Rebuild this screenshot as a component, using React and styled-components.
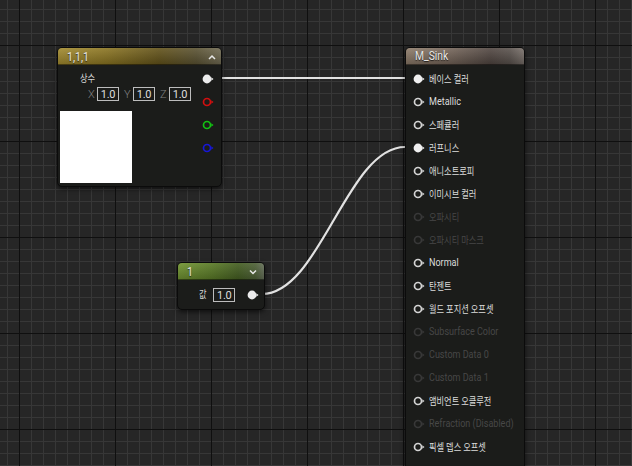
import styled, { createGlobalStyle } from "styled-components";

const GlobalStyle = createGlobalStyle`
  html, body {
    margin: 0;
    padding: 0;
    background: #262626;
  }
  body {
    width: 632px;
    height: 466px;
    overflow: hidden;
    font-family: Roboto, "Noto Sans CJK KR", sans-serif;
  }
`;

const headerTones = {
  gold: `linear-gradient(180deg, rgba(255,255,255,0.10), rgba(0,0,0,0.22)),
    linear-gradient(90deg, #a38b2e 0%, #8a7421 30%, #625219 62%, #5a5232 85%, #706a52 100%)`,
  green: `linear-gradient(180deg, rgba(255,255,255,0.08), rgba(0,0,0,0.22)),
    linear-gradient(90deg, #729532 0%, #5a7a27 40%, #455f22 70%, #4f6238 90%, #66705a 100%)`,
  clay: `linear-gradient(180deg, rgba(255,255,255,0.10), rgba(0,0,0,0.25)),
    linear-gradient(90deg, #8e7c6a 0%, #77675b 35%, #514641 72%, #5a524d 88%, #7a716b 100%)`,
};

const materialInputs = [
  ["베이스 컬러", "on"],
  ["Metallic", "en"],
  ["스페큘러", "en"],
  ["러프니스", "on"],
  ["애니소트로피", "en"],
  ["이미시브 컬러", "en"],
  ["오파시티", "dis"],
  ["오파시티 마스크", "dis"],
  ["Normal", "en"],
  ["탄젠트", "en"],
  ["월드 포지션 오프셋", "en"],
  ["Subsurface Color", "dis"],
  ["Custom Data 0", "dis"],
  ["Custom Data 1", "dis"],
  ["앰비언트 오클루전", "en"],
  ["Refraction (Disabled)", "dis"],
  ["픽셀 뎁스 오프셋", "en"],
];

const isKorean = (text) => /[가-힣]/.test(text);

const Pin = ({ color = "#d8d8d8", filled }) => (
  <PinSvg width="12" height="10" viewBox="0 0 12 10">
    {filled ? (
      <circle cx="5" cy="5" r="4.4" fill={color} />
    ) : (
      <circle cx="5" cy="5" r="3.5" fill="none" stroke={color} strokeWidth="1.7" />
    )}
    <path d="M9.3 3.2 L11.5 5 L9.3 6.8 Z" fill={color} />
  </PinSvg>
);

const Chevron = ({ up }) => (
  <svg width="8" height="6" viewBox="0 0 8 6">
    <polyline
      points={up ? "1,5 4,2 7,5" : "1,1.5 4,4.5 7,1.5"}
      fill="none"
      stroke="#e8e8e8"
      strokeWidth="1.5"
    />
  </svg>
);

const App = () => {
  return (
    <>
      <GlobalStyle />
      <Canvas>
        <Wires width="632" height="466" viewBox="0 0 632 466">
          <path d="M210 78 L414 78" />
          <path d="M250 294 L262 294 C 320 294, 347 147, 405 147 L414 147" />
        </Wires>

        {/* constant3vector */}
        <Node $x={57} $y={47} $w={165}>
          <Header $tone="gold" $right={5}>
            <Title $size={13.5} $sx={0.78}>1,1,1</Title>
            <Chevron up />
          </Header>
          <Body>
            <VectorColumn>
              <SmallLabel>상수</SmallLabel>
              <FieldRow>
                <Field>
                  <Axis>X</Axis>
                  <ValueBox>1.0</ValueBox>
                </Field>
                <Field>
                  <Axis>Y</Axis>
                  <ValueBox>1.0</ValueBox>
                </Field>
                <Field>
                  <Axis>Z</Axis>
                  <ValueBox>1.0</ValueBox>
                </Field>
              </FieldRow>
              <Preview />
            </VectorColumn>
            <PinColumn>
              <Pin filled color="#ececec" />
              <Pin color="#d10f0f" />
              <Pin color="#12c212" />
              <Pin color="#1717d6" />
            </PinColumn>
          </Body>
        </Node>

        {/* constant */}
        <Node $x={177} $y={262} $w={88}>
          <Header $tone="green" $right={7}>
            <Title $size={13.5} $sx={0.78}>1</Title>
            <Chevron />
          </Header>
          <ScalarBody>
            <SmallLabel $inline>값</SmallLabel>
            <ValueBox>1.0</ValueBox>
            <ScalarPin>
              <Pin filled color="#ececec" />
            </ScalarPin>
          </ScalarBody>
        </Node>

        {/* material result */}
        <Node $x={405} $y={47} $w={120} $open>
          <Header $tone="clay" $right={6}>
            <Title $size={12} $sx={0.86}>M_Sink</Title>
          </Header>
          <InputList>
            {materialInputs.map(([name, state]) => (
              <InputRow key={name}>
                <Pin
                  filled={state === "on"}
                  color={state === "dis" ? "#383838" : state === "on" ? "#f0f0f0" : "#d4d4d4"}
                />
                <RowLabel $ko={isKorean(name)} $dim={state === "dis"}>
                  {name}
                </RowLabel>
              </InputRow>
            ))}
          </InputList>
        </Node>
      </Canvas>
    </>
  );
};

const Canvas = styled.div`
  position: relative;
  width: 632px;
  height: 466px;
  overflow: hidden;
  background-color: #262626;
  background-image:
    linear-gradient(to right, #0f0f0f 1px, transparent 1px),
    linear-gradient(to bottom, #0f0f0f 1px, transparent 1px),
    linear-gradient(to right, #373737 1px, transparent 1px),
    linear-gradient(to bottom, #373737 1px, transparent 1px);
  background-size: 96px 96px, 96px 96px, 12px 12px, 12px 12px;
  background-position: 19px 45px, 19px 45px, 7px 9px, 7px 9px;
`;

const Wires = styled.svg`
  position: absolute;
  left: 0;
  top: 0;
  pointer-events: none;

  path {
    fill: none;
    stroke: #e2e2e2;
    stroke-width: 2.2;
  }
`;

const Node = styled.div`
  position: absolute;
  left: ${(p) => p.$x}px;
  top: ${(p) => p.$y}px;
  width: ${(p) => p.$w}px;
  min-height: ${(p) => (p.$open ? "440px" : "0")};
  box-sizing: border-box;
  display: flex;
  flex-direction: column;
  background: #1b1c1a;
  border: 1px solid #0b0b0b;
  border-radius: 5px;
  box-shadow: 0 2px 5px rgba(0, 0, 0, 0.6);
  overflow: hidden;
`;

const Header = styled.div`
  height: 17px;
  display: flex;
  align-items: center;
  justify-content: space-between;
  padding: 0 ${(p) => p.$right}px 0 9px;
  background: ${(p) => headerTones[p.$tone]};
  box-shadow: inset 0 -1px 0 rgba(0, 0, 0, 0.45);
`;

const Title = styled.span`
  display: inline-block;
  font-size: ${(p) => p.$size}px;
  line-height: 17px;
  color: #e6e6e6;
  transform: scaleX(${(p) => p.$sx});
  transform-origin: left center;
  text-shadow: 0 1px 1px rgba(0, 0, 0, 0.7);
  white-space: nowrap;
`;

const Body = styled.div`
  display: flex;
  padding: 9px 0 3px 2px;
`;

const VectorColumn = styled.div`
  flex: 1;
  display: flex;
  flex-direction: column;
`;

const SmallLabel = styled.span`
  display: inline-block;
  font-size: 10px;
  line-height: 10px;
  height: 10px;
  color: #d6d6d6;
  margin-left: ${(p) => (p.$inline ? 0 : 20)}px;
  margin-right: ${(p) => (p.$inline ? 5 : 0)}px;
  transform: scaleX(0.82);
  transform-origin: left center;
`;

const FieldRow = styled.div`
  display: flex;
  align-items: center;
  gap: 5px;
  margin: 3px 0 0 28px;
`;

const Field = styled.div`
  display: flex;
  align-items: center;
  gap: 3px;
`;

const Axis = styled.span`
  font-size: 11px;
  font-weight: 300;
  color: #808080;
  width: 6px;
`;

const ValueBox = styled.span`
  box-sizing: border-box;
  width: 22px;
  height: 14px;
  border: 1px solid #bdbdbd;
  display: flex;
  align-items: center;
  justify-content: center;
  font-size: 11px;
  color: #dedede;
  letter-spacing: -0.3px;
`;

const Preview = styled.div`
  width: 72px;
  height: 72px;
  margin-top: 10px;
  background: #ffffff;
`;

const PinColumn = styled.div`
  display: flex;
  flex-direction: column;
  gap: 13px;
  padding-right: 7px;
`;

const PinSvg = styled.svg`
  flex: none;
  display: block;
`;

const ScalarBody = styled.div`
  display: flex;
  align-items: center;
  padding: 8px 0 7px 21px;
`;

const ScalarPin = styled.div`
  margin-left: 12px;
`;

const InputList = styled.div`
  display: flex;
  flex-direction: column;
  padding: 2px 0 0 7px;
`;

const InputRow = styled.div`
  height: 23px;
  display: flex;
  align-items: center;
  gap: 4px;
`;

const RowLabel = styled.span`
  display: inline-block;
  white-space: nowrap;
  font-size: ${(p) => (p.$ko ? "10px" : "10.5px")};
  transform: scaleX(${(p) => (p.$ko ? 0.82 : 0.86)});
  transform-origin: left center;
  color: ${(p) => (p.$dim ? "#474747" : "#dcdcdc")};
`;

export default App;
